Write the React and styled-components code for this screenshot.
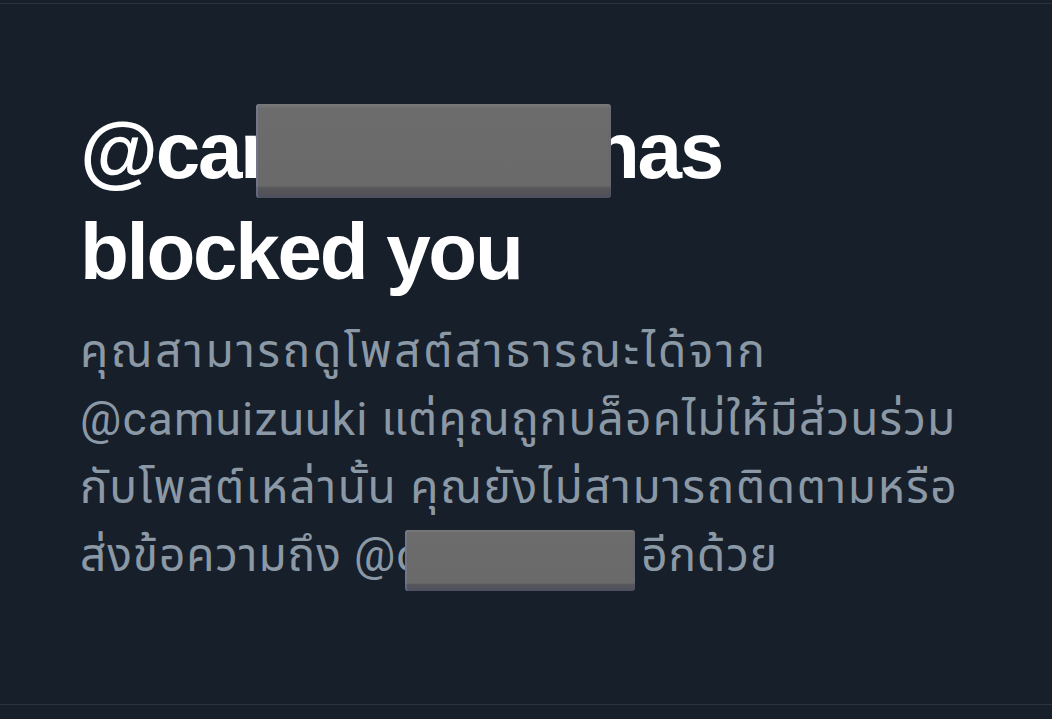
import React from 'react';
import styled, { createGlobalStyle } from 'styled-components';

const GlobalStyle = createGlobalStyle`
    html, body {
        margin: 0;
        padding: 0;
        background-color: #161f2a;
    }
`;

const Page = styled.div`
    width: 1052px;
    height: 719px;
    padding-top: 3px;
    box-sizing: border-box;
    background-color: #161f2a;
    overflow: hidden;
`;

const Card = styled.section`
    height: 702px;
    box-sizing: border-box;
    border-top: 1px solid #2a3440;
    border-bottom: 1px solid #2a3440;
    padding: 99px 80px 0 80px;
`;

const Heading = styled.h1`
    margin: 0;
    font-family: "Liberation Sans", Arial, sans-serif;
    font-weight: 700;
    font-size: 80px;
    line-height: 96px;
    letter-spacing: -2.3px;
    color: #ffffff;
`;

const Message = styled.p`
    margin: 17px 0 0 0;
    font-family: Roboto, "Noto Sans Thai", "Noto Sans", sans-serif;
    font-size: 46px;
    line-height: 68px;
    color: #8b98a5;
`;

const Line = styled.span`
    display: block;
    white-space: nowrap;
    letter-spacing: ${(p) => p.$ls || 0}px;
`;

const Redact = styled.span`
    display: inline-block;
    position: relative;
    top: ${(p) => p.$top}px;
    width: ${(p) => p.$w}px;
    height: ${(p) => p.$h}px;
    margin: 0 ${(p) => p.$mr}px 0 ${(p) => p.$ml}px;
    vertical-align: middle;
    border-radius: 3px;
    background: linear-gradient(180deg, #7a7a7c 0%, #6c6c6c 5%, #6a6a6a 87%, #58585b 89%, #4e4e52 100%);
    box-shadow: inset 2px 0 0 rgba(140, 150, 200, 0.3), inset 0 -3px 4px rgba(80, 90, 160, 0.2);
`;

const App = () => {
    return (
        <Page>
            <GlobalStyle />
            <Card>
                <Heading>
                    @car<Redact $w={355} $h={94} $ml={-13} $mr={-20} $top={-6} />has
                    <br />
                    blocked you
                </Heading>
                <Message>
                    <Line $ls={2.6}>คุณสามารถดูโพสต์สาธารณะได้จาก</Line>
                    <Line $ls={1.2}>@camuizuuki แต่คุณถูกบล็อคไม่ให้มีส่วนร่วม</Line>
                    <Line $ls={1.6}>กับโพสต์เหล่านั้น คุณยังไม่สามารถติดตามหรือ</Line>
                    <Line $ls={0.9}>
                        ส่งข้อความถึง @c<Redact $w={230} $h={61} $ml={-16} $mr={6} $top={2} />อีกด้วย
                    </Line>
                </Message>
            </Card>
        </Page>
    );
};

export default App;
